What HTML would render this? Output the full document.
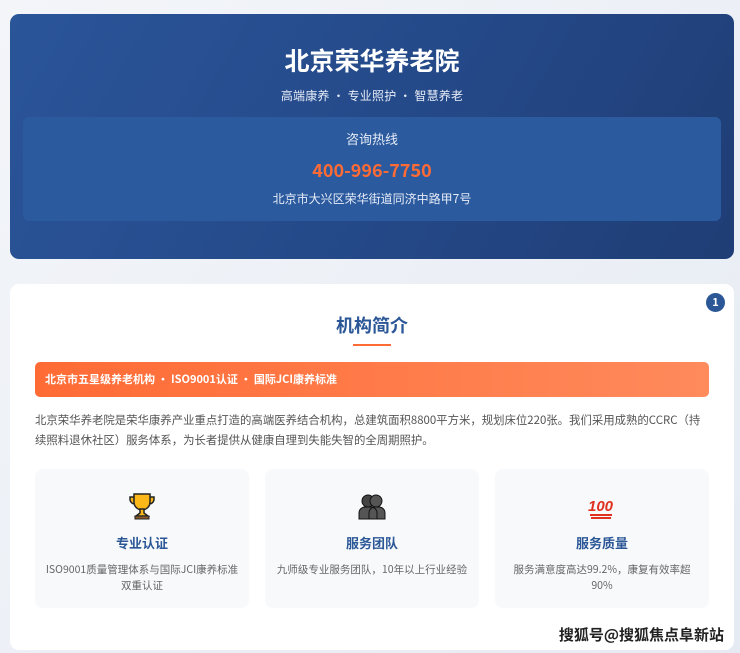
<!DOCTYPE html>
<html><head><meta charset="utf-8"><style>
*{margin:0;padding:0;box-sizing:border-box}
body{width:740px;height:653px;overflow:hidden;background:linear-gradient(135deg,#f3f5f9,#e6ebf3);font-family:"Noto Sans CJK SC","Liberation Sans",sans-serif;position:relative;line-height:1}
.hd{position:absolute;left:10px;top:14px;width:724px;height:245px;border-radius:9px;background:linear-gradient(120deg,#2a5599 0%,#254a8a 50%,#1f3d75 100%);text-align:center;color:#fff}
.hd h1{position:absolute;top:33px;width:100%;font-size:25px;line-height:26px;font-weight:bold}
.hd .sub{position:absolute;top:74px;width:100%;font-size:12px;line-height:16px;color:#e6ecf7;letter-spacing:0.2px}
.in{position:absolute;left:13px;top:103px;width:698px;height:104px;border-radius:6px;background:#2b5a9f}
.in .a{position:absolute;top:14px;width:100%;font-size:13px;line-height:16px;color:#e6ecf7}
.in .p{position:absolute;top:42px;width:100%;font-size:18px;line-height:22px;font-weight:bold;color:#ff6b35}
.in .b{position:absolute;top:74px;width:100%;font-size:12px;line-height:16px;color:#e6ecf7}
.cd{position:absolute;left:10px;top:284px;width:724px;height:366px;border-radius:9px;background:#fff}
.badge{position:absolute;left:696px;top:9px;width:19px;height:19px;border-radius:50%;background:#2b5797;color:#fff;font-size:11px;font-weight:bold;text-align:center;line-height:19px}
.t{position:absolute;top:30px;width:100%;text-align:center;font-size:18px;line-height:22px;font-weight:bold;color:#2b5797}
.ul{position:absolute;left:343px;top:60px;width:38px;height:2px;background:#ff6b35}
.bn{position:absolute;left:25px;top:78px;width:674px;height:35px;border-radius:5px;background:linear-gradient(90deg,#ff6b35,#ff8a5c);color:#fff;font-size:11px;font-weight:bold;padding-left:10px;line-height:35px}
.pp{position:absolute;left:25px;top:126px;width:676px;font-size:11.4px;line-height:20px;color:#555}
.f{position:absolute;top:185px;width:214px;height:139px;border-radius:8px;background:#f7f9fb;text-align:center}
.f svg{position:absolute;left:92px;top:22px}
.f h3{position:absolute;top:66px;width:100%;font-size:13px;line-height:16px;font-weight:bold;color:#2b5797}
.f p{position:absolute;top:93px;left:0;right:0;font-size:10.5px;line-height:16px;color:#666;white-space:nowrap}
.wm{position:absolute;right:16px;top:625px;font-size:15px;line-height:20px;font-weight:bold;color:#222;text-shadow:0 0 2px #fff}
</style></head><body>
<div class="hd"><h1>北京荣华养老院</h1><div class="sub">高端康养 · 专业照护 · 智慧养老</div>
<div class="in"><div class="a">咨询热线</div><div class="p">400-996-7750</div><div class="b">北京市大兴区荣华街道同济中路甲7号</div></div></div>
<div class="cd"><div class="badge">1</div><div class="t">机构简介</div><div class="ul"></div>
<div class="bn">北京市五星级养老机构 · ISO9001认证 · 国际JCI康养标准</div>
<div class="pp">北京荣华养老院是荣华康养产业重点打造的高端医养结合机构，总建筑面积8800平方米，规划床位220张。我们采用成熟的CCRC（持续照料退休社区）服务体系，为长者提供从健康自理到失能失智的全周期照护。</div>
<div class="f" style="left:25px"><svg width="30" height="30" viewBox="0 0 30 30"><path d="M7 3h16v8a8 8 0 0 1-16 0z M7 6H3v3a5 5 0 0 0 5 4 M23 6h4v3a5 5 0 0 1-5 4" fill="#fbb818" stroke="#222" stroke-width="1.5"/><path d="M13 18h4v4l4 3H9l4-3z" fill="#fbb818" stroke="#222" stroke-width="1.5"/><rect x="8" y="25" width="14" height="3" fill="#8a5a2b" stroke="#222" stroke-width="1"/></svg><h3>专业认证</h3><p>ISO9001质量管理体系与国际JCI康养标准<br>双重认证</p></div>
<div class="f" style="left:255px"><svg width="30" height="30" viewBox="0 0 30 30"><circle cx="11" cy="10" r="6" fill="#444" stroke="#111"/><circle cx="19" cy="10" r="6" fill="#555" stroke="#111"/><path d="M2 28v-6a6 6 0 0 1 6-6h6a6 6 0 0 1 6 6v6z M12 28v-6a6 6 0 0 1 6-6h4a6 6 0 0 1 6 6v6z" fill="#555" stroke="#111"/></svg><h3>服务团队</h3><p>九师级专业服务团队，10年以上行业经验</p></div>
<div class="f" style="left:485px"><svg width="30" height="30" viewBox="0 0 30 30"><text x="1" y="20" font-size="15" font-weight="bold" font-style="italic" fill="#e0301e" font-family="Liberation Sans">100</text><path d="M3 24h22M4 27h20" stroke="#e0301e" stroke-width="2"/></svg><h3>服务质量</h3><p>服务满意度高达99.2%，康复有效率超<br>90%</p></div>
</div>
<div class="wm">搜狐号@搜狐焦点阜新站</div>
</body></html>
